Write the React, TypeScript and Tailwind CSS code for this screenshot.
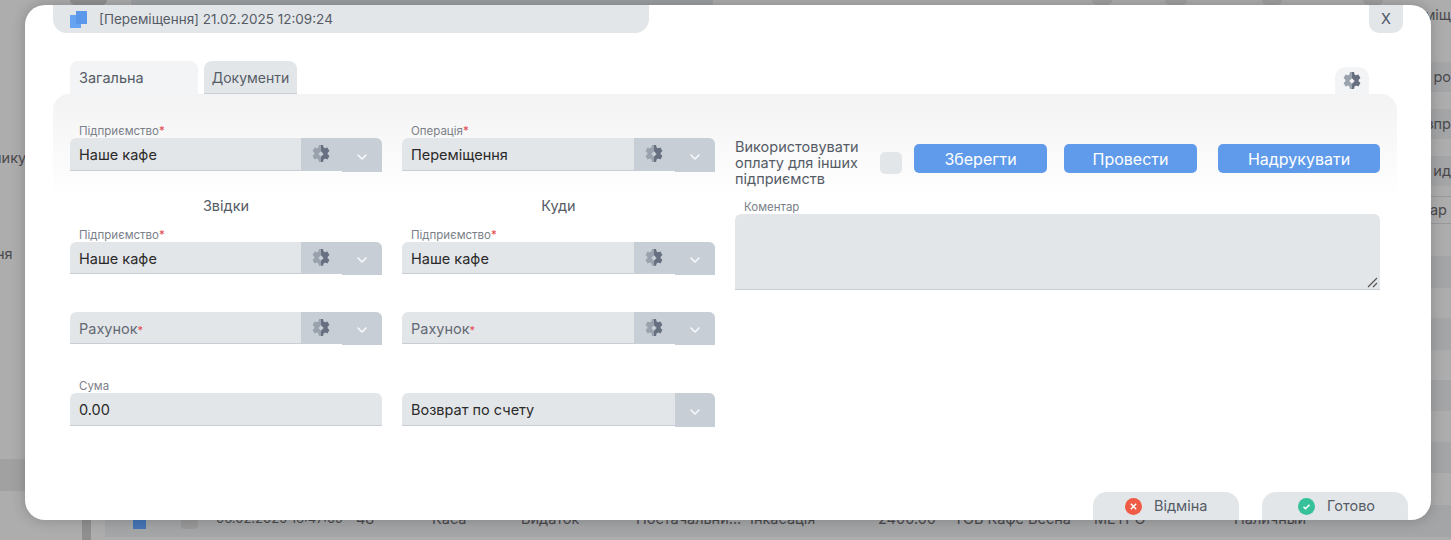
import React from "react";

// two tone gear used on the select fields
const Gear = ({ hole = "#c8ced6" }: { hole?: string }) => (
  <svg width="18" height="18" viewBox="1 1 16 16">
    <defs>
      <linearGradient id="gearTone" x1="0" x2="1" y1="0" y2="0">
        <stop offset="0.5" stopColor="#9aa2ae" />
        <stop offset="0.5" stopColor="#667080" />
      </linearGradient>
    </defs>
    <path
      fill="url(#gearTone)"
      d="M7.200 1h3.600l.5 2.200 1.300.7 2.100-.7 1.800 3.100-1.600 1.500v1.400l1.600 1.500-1.800 3.100-2.100-.7-1.300.7-.5 2.200H7.200l-.5-2.200-1.300-.7-2.100.7-1.800-3.100 1.600-1.500V7.800l-1.600-1.500 1.800-3.100 2.100.7 1.300-.7z"
    />
    <path fill={hole} d="M9 6.600 11.400 9 9 11.400 6.600 9z" />
  </svg>
);

const Chevron = () => (
  <svg width="12" height="8" viewBox="0 0 12 8" fill="none" stroke="#f8f9fa" strokeWidth="1.6" strokeLinecap="round" strokeLinejoin="round">
    <path d="M2 2l4 4 4-4" />
  </svg>
);

const Label = ({ text, required }: { text: string; required?: boolean }) => (
  <div className="h-[14px] pl-[9px] text-[11.5px] leading-[14px] text-[#7b8089]">
    {text}
    {required && <span className="text-[#e5484d]">*</span>}
  </div>
);

const SelectField = ({
  value,
  placeholder,
  gear = true,
  h = "h-[33px]",
}: {
  value?: string;
  placeholder?: string;
  gear?: boolean;
  h?: string;
}) => (
  <div className={`flex ${h} rounded-t-[6px] bg-[#e3e6e9]`}>
    <div className="flex min-w-0 flex-1 items-center border-b border-[#c9ced6] pt-[2px] pl-[9px] text-[14.5px] text-[#2a2a2a]">
      {value ?? (
        <span className="text-[#646a74]">
          {placeholder}
          <span className="text-[11px] text-[#e5484d]">*</span>
        </span>
      )}
    </div>
    {gear && (
      <div className="flex w-[41px] items-start justify-center bg-[#c8ced6] pt-[7px] pr-[1px]">
        <Gear />
      </div>
    )}
    <div className="flex h-[calc(100%+1px)] w-[40px] items-center justify-center rounded-tr-[6px] bg-[#c8ced6] pt-[3px]">
      <Chevron />
    </div>
  </div>
);

const BlueButton = ({ text, w }: { text: string; w: string }) => (
  <button className={`h-[29px] ${w} rounded-[5px] bg-[#5f9bea] text-[16px] text-white`}>{text}</button>
);

const tableRow = [
  ["w-[140px] text-[13px]", "06.02.2025 16:47:09"],
  ["w-[76px]", "48"],
  ["w-[89px]", "Каса"],
  ["w-[115px]", "Видаток"],
  ["w-[114px]", "Постачальни..."],
  ["w-[128px]", "Інкасація"],
  ["w-[76px]", "2400.00"],
  ["w-[140px]", "ТОВ Кафе Весна"],
  ["w-[140px]", "МЕТРО"],
  ["w-[110px]", "Наличный"],
];

const Stripe = ({ h, text, dark }: { h: string; text?: string; dark?: boolean }) => (
  <div className={`${h} shrink-0 ${dark ? "bg-[#a4a5a7]" : ""} flex items-center justify-end`}>{text}</div>
);

// the list page that sits behind the dialog, only its edges are visible
const BackgroundPage = () => (
  <div className="flex h-[540px] overflow-hidden bg-[#adadad] text-[14.5px] text-[#4a4a4d]">
    <div className="flex w-[82px] shrink-0 flex-col">
      <div className="ml-[70px] h-[5px] w-[37px] shrink-0 rounded-b-full bg-[#929292]" />
      <div className="h-[145px] shrink-0" />
      <div className="-ml-[7px] h-[16px] shrink-0 leading-[16px]">нику</div>
      <div className="h-[80px] shrink-0" />
      <div className="-ml-[4px] h-[16px] shrink-0 leading-[16px]">ня</div>
      <div className="h-[197px] shrink-0" />
      <div className="h-[32px] shrink-0 bg-[#a1a1a1]" />
    </div>
    <div className="flex w-[23px] shrink-0 flex-col justify-end">
      <div className="h-[20px] w-[9px] bg-[#8f8f8f]" />
    </div>
    <div className="flex min-w-0 flex-1 flex-col">
      <div className="flex h-[5px] shrink-0">
        <div className="ml-[26px] w-[582px] bg-[#9da0a3]" />
        <div className="ml-[379px] w-[20px] rounded-b-[6px] bg-[#a0a0a0]" />
        <div className="ml-[53px] w-[22px] rounded-b-[6px] bg-[#a0a0a0]" />
        <div className="ml-[75px] w-[20px] rounded-b-[6px] bg-[#a0a0a0]" />
        <div className="ml-[81px] w-[20px] rounded-b-[6px] bg-[#a0a0a0]" />
      </div>
      <div className="h-[57px] shrink-0 text-right leading-[20px]">еміщ</div>
      <Stripe h="h-[30px]" text="ро" dark />
      <Stripe h="h-[17px]" />
      <Stripe h="h-[30px]" text="зпр" dark />
      <Stripe h="h-[17px]" />
      <Stripe h="h-[30px]" text="ид" dark />
      <div className="h-[11px] shrink-0 border-b border-[#999]" />
      <div className="flex h-[27px] shrink-0 items-center justify-end border-b border-[#999] pr-[4px]">ар</div>
      <Stripe h="h-[32px]" />
      <Stripe h="h-[32px]" dark />
      <Stripe h="h-[30px]" />
      <Stripe h="h-[32px]" dark />
      <Stripe h="h-[30px]" />
      <Stripe h="h-[31px]" dark />
      <Stripe h="h-[31px]" />
      <Stripe h="h-[31px]" dark />
      <Stripe h="h-[32px]" />
      <div className="flex h-[32px] shrink-0 items-center bg-[#a4a5a7]">
        <div className="ml-[28px] h-[16px] w-[13px] shrink-0 bg-[#4575b5]" />
        <div className="ml-[35px] h-[16px] w-[17px] shrink-0 rounded bg-[#999]" />
        <div className="ml-[18px] flex items-center whitespace-nowrap pb-[4px]">
          {tableRow.map(([w, text]) => (
            <div key={text} className={`${w} shrink-0`}>
              {text}
            </div>
          ))}
        </div>
      </div>
    </div>
  </div>
);

const Dialog = () => (
  <div className="absolute top-[5px] left-[25px] flex h-[515px] w-[1406px] flex-col overflow-hidden rounded-[20px] bg-white pr-[28px] pl-[28px] shadow-[0_0_14px_rgba(0,0,0,0.22)]">
    {/* header */}
    <div className="flex items-start justify-between">
      <div className="flex h-[28px] w-[596px] items-center gap-[12px] rounded-b-[14px] bg-[#e3e6e9] pl-[17px] text-[13.5px] text-[#565c66]">
        <svg width="17" height="17" viewBox="0 0 17 17">
          <rect x="6" width="11" height="13" fill="#5b97ea" />
          <rect y="4" width="11" height="13" fill="#66a3f0" />
          <rect x="6" y="4" width="5" height="9" fill="#5a96e8" />
        </svg>
        [Переміщення] 21.02.2025 12:09:24
      </div>
      <div className="flex h-[28px] w-[34px] items-center justify-center rounded-b-[10px] bg-[#e3e6e9] text-[14.5px] text-[#4b5563]">
        X
      </div>
    </div>

    {/* tabs */}
    <div className="mt-[28px] flex h-[33px] items-stretch pr-[34px] pl-[17px]">
      <div className="flex w-[128px] items-center rounded-t-[8px] bg-[#f3f4f5] pl-[9px] text-[14.5px] text-[#565c66]">Загальна</div>
      <div className="ml-[6px] flex w-[93px] items-center justify-center rounded-t-[8px] border-b border-[#c9ced6] bg-[#e3e6e9] pt-[1px] text-[14px] text-[#565c66]">
        Документи
      </div>
      <div className="ml-auto flex h-[27px] w-[34px] items-center justify-center self-end rounded-t-[10px] bg-[#f3f4f5] pt-[1px]">
        <Gear hole="#f3f4f5" />
      </div>
    </div>

    {/* form panel */}
    <div className="mr-[6px] flex h-[340px] gap-[20px] rounded-t-[16px] bg-[linear-gradient(#f3f3f4_0px,#ffffff_105px)] pt-[30px] pr-[17px] pl-[17px]">
      <div className="grid w-[645px] shrink-0 grid-cols-[312px_313px] content-start gap-x-[20px]">
        <div>
          <Label text="Підприємство" required />
          <SelectField value="Наше кафе" />
        </div>
        <div>
          <Label text="Операція" required />
          <SelectField value="Переміщення" />
        </div>

        <div className="mt-[23px] h-[24px] text-center text-[14.5px] leading-[24px] text-[#565c66]">Звідки</div>
        <div className="mt-[23px] h-[24px] text-center text-[14.5px] leading-[24px] text-[#565c66]">Куди</div>

        <div className="mt-[10px]">
          <Label text="Підприємство" required />
          <SelectField value="Наше кафе" h="h-[32px]" />
        </div>
        <div className="mt-[10px]">
          <Label text="Підприємство" required />
          <SelectField value="Наше кафе" h="h-[32px]" />
        </div>

        <div className="mt-[38px]">
          <SelectField placeholder="Рахунок" h="h-[32px]" />
        </div>
        <div className="mt-[38px]">
          <SelectField placeholder="Рахунок" h="h-[32px]" />
        </div>

        <div className="mt-[35px]">
          <Label text="Сума" />
          <div className="flex h-[33px] items-center rounded-t-[6px] border-b border-[#c9ced6] bg-[#e3e6e9] pt-[2px] pl-[9px] text-[14.5px] text-[#2a2a2a]">
            0.00
          </div>
        </div>
        <div className="mt-[49px]">
          <SelectField value="Возврат по счету" gear={false} />
        </div>
      </div>

      <div className="flex min-w-0 flex-1 flex-col">
        <div className="flex h-[65px] items-start">
          <div className="mt-[15px] w-[145px] text-[14.5px] leading-[16px] text-[#565c66]">
            Використовувати оплату для інших підприємств
          </div>
          <div className="mt-[28px] h-[22px] w-[22px] rounded-[5px] bg-[#e3e6e9]" />
          <div className="mt-[20px] ml-[12px] flex gap-[17px]">
            <BlueButton text="Зберегти" w="w-[133px]" />
            <BlueButton text="Провести" w="w-[133px]" />
          </div>
          <div className="mt-[20px] ml-[21px]">
            <BlueButton text="Надрукувати" w="w-[162px]" />
          </div>
        </div>
        <div className="mt-[11px]">
          <Label text="Коментар" />
          <div className="relative h-[76px] rounded-t-[6px] border-b border-[#c9ced6] bg-[#e3e6e9]">
            <svg className="absolute right-[2px] bottom-[1px]" width="11" height="11" viewBox="0 0 11 11" stroke="#555" strokeWidth="1.2">
              <path d="M1 10l9-9M6 10l4-4" />
            </svg>
          </div>
        </div>
      </div>
    </div>

    {/* footer */}
    <div className="mt-auto -mr-[5px] flex justify-end gap-[23px]">
      <div className="flex h-[28px] w-[146px] items-center gap-[12px] rounded-t-[14px] bg-[#e3e6e9] pl-[32px] text-[14.5px] text-[#565c66]">
        <svg width="17" height="17" viewBox="0 0 17 17">
          <circle cx="8.500" cy="8.500" r="8.500" fill="#ef5b45" />
          <path d="M5.800 5.800l5.400 5.400M11.200 5.800l-5.400 5.400" stroke="#fff" strokeWidth="1.500" />
        </svg>
        Відміна
      </div>
      <div className="flex h-[28px] w-[146px] items-center gap-[12px] rounded-t-[14px] bg-[#e3e6e9] pl-[36px] text-[14.5px] text-[#565c66]">
        <svg width="17" height="17" viewBox="0 0 17 17" fill="none">
          <circle cx="8.500" cy="8.500" r="8.500" fill="#36c19b" />
          <path d="M5.500 8.800l2 2 4-4" stroke="#fff" strokeWidth="1.500" />
        </svg>
        Готово
      </div>
    </div>
  </div>
);

export default function App() {
  return (
    <div className="relative h-[540px] overflow-hidden font-['Inter','Noto_Sans',sans-serif]">
      <BackgroundPage />
      <Dialog />
    </div>
  );
}
